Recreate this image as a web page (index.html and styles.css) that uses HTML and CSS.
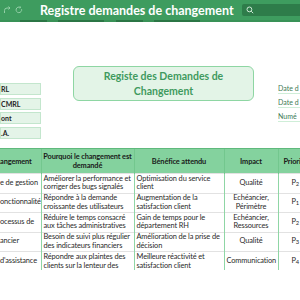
FILE: index.html
```html
<!DOCTYPE html>
<html lang="fr">
<head>
<meta charset="utf-8">
<link rel="stylesheet" href="styles.css">
</head>
<body>
<div class="page">
  <header class="topbar">
    <div class="qa">
      <svg class="qa-icon" width="8" height="8" viewBox="0 0 8 8"><path d="M1.5 7V4.5A2.5 2.5 0 0 1 4 2h3M5.5 0.5 7 2 5.5 3.5" fill="none" stroke="#93cfa7" stroke-width="1"/></svg>
      <svg class="qa-icon" width="8" height="8" viewBox="0 0 8 8"><path d="M6.6 3.2A2.8 2.8 0 1 1 5.4 1.5M5.2 0.4 5.6 1.7 4.3 2" fill="none" stroke="#93cfa7" stroke-width="1"/></svg>
    </div>
    <div class="apptitle">Registre demandes de changement</div>
    <div class="search">
      <svg width="8" height="8" viewBox="0 0 8 8"><circle cx="3.4" cy="3.4" r="2.4" fill="none" stroke="#cfe9d7" stroke-width="1"/><path d="M5.2 5.2 7.2 7.2" stroke="#cfe9d7" stroke-width="1"/></svg>
    </div>
  </header>
  <div class="tabs">
    <span class="tab t1"></span><span class="tab t2"></span><span class="tab t3"></span><span class="tab t4"></span>
  </div>
  <section class="head">
    <div class="infos">
      <div class="info">RL</div>
      <div class="info">CMRL</div>
      <div class="info">ont</div>
      <div class="info">.A.</div>
    </div>
    <div class="titlebox">Registe des Demandes de<br>Changement</div>
    <div class="meta">
      <div class="metaline">Date d</div>
      <div class="metaline">Date d</div>
      <div class="metaline">Numé</div>
    </div>
  </section>
  <div class="tablewrap">
    <table class="reg">
      <colgroup>
        <col class="c1"><col class="c2"><col class="c3"><col class="c4"><col class="c5">
      </colgroup>
      <thead>
        <tr>
          <th class="first">angement</th>
          <th>Pourquoi le changement est<br>demandé</th>
          <th>Bénéfice attendu</th>
          <th>Impact</th>
          <th>Priorité</th>
        </tr>
      </thead>
      <tbody>
        <tr>
          <td class="first">e de gestion</td>
          <td>Améliorer la performance et corriger des bugs signalés</td>
          <td>Optimisation du service client</td>
          <td class="ctr">Qualité</td>
          <td class="ctr">P<span class="n">2</span></td>
        </tr>
        <tr>
          <td class="first">onctionnalité</td>
          <td>Répondre à la demande croissante des utilisateurs</td>
          <td>Augmentation de la satisfaction client</td>
          <td class="ctr">Echéancier, Périmètre</td>
          <td class="ctr">P<span class="n">1</span></td>
        </tr>
        <tr>
          <td class="first">ocessus de</td>
          <td>Réduire le temps consacré aux tâches administratives</td>
          <td>Gain de temps pour le département RH</td>
          <td class="ctr">Echéancier, Ressources</td>
          <td class="ctr">P<span class="n">2</span></td>
        </tr>
        <tr>
          <td class="first">ancier</td>
          <td>Besoin de suivi plus régulier des indicateurs financiers</td>
          <td>Amélioration de la prise de décision</td>
          <td class="ctr">Qualité</td>
          <td class="ctr">P<span class="n">3</span></td>
        </tr>
        <tr>
          <td class="first">d'assistance</td>
          <td>Répondre aux plaintes des clients sur la lenteur des</td>
          <td>Meilleure réactivité et satisfaction client</td>
          <td class="ctr">Communication</td>
          <td class="ctr">P<span class="n">4</span></td>
        </tr>
      </tbody>
    </table>
  </div>
</div>
</body>
</html>
```
FILE: styles.css
```css
* { box-sizing: border-box; }
html, body { margin: 0; padding: 0; background: #fff; }
.page { width: 300px; height: 300px; overflow: hidden; font-family: Lato, "Liberation Sans", sans-serif; }

.topbar { height: 20px; background: #3e9c5f; display: flex; align-items: center; }
.qa { display: flex; gap: 4px; padding-left: 3px; width: 40px; }
.qa-icon { display: block; }
.apptitle { color: #fff; font-weight: 700; font-size: 12.5px; white-space: nowrap; width: 202px; }
.search { flex: 1; height: 12px; background: #2e7c4a; border-radius: 2px 0 0 2px; display: flex; align-items: center; padding-left: 4px; }
.search svg { display: block; }

.tabs { height: 2px; background: #399257; display: flex; }
.tab { height: 2px; background: #2b7645; }
.t1 { margin-left: 20px; width: 27px; }
.t2 { margin-left: 11px; width: 46px; }
.t3 { margin-left: 12px; width: 27px; }
.t4 { margin-left: 11px; width: 46px; }

.head { display: flex; align-items: flex-start; height: 126px; }
.infos { width: 41px; margin-top: 61px; display: flex; flex-direction: column; gap: 2.5px; }
.info { height: 12px; background: #e4f4e8; border: 1px solid #c3e6cd; font-size: 7px; font-weight: 700; color: #1e1e1e; line-height: 10px; padding-left: 0; }
.titlebox { margin-top: 44px; margin-left: 32px; width: 181px; height: 35px; border: 1px solid #8ed6a3; border-radius: 6px; background: #e3f4e7; color: #3f9a5e; font-weight: 700; font-size: 10.5px; line-height: 14.5px; text-align: center; padding-top: 2px; }
.meta { margin-left: 24px; margin-top: 62px; flex: 1; display: flex; flex-direction: column; gap: 4px; }
.metaline { font-size: 7px; color: #3d7a55; height: 10px; line-height: 8px; border-bottom: 1px solid #cfeed8; white-space: nowrap; overflow: hidden; }

.tablewrap { width: 300px; height: 122px; overflow: hidden; }
.reg { border-collapse: collapse; table-layout: fixed; width: 312px; font-size: 7.4px; letter-spacing: -0.12px; color: #2a2a2a; }
.c1 { width: 41px; } .c2 { width: 93px; } .c3 { width: 90px; } .c4 { width: 54px; } .c5 { width: 34px; }
.reg th { background: #84d29e; font-weight: 700; color: #1a1a1a; height: 25px; line-height: 9px; text-align: center; border-top: 1px solid #5fb97c; border-left: 1px solid #73c78e; padding: 0 1px; }
.reg td { height: 19.5px; line-height: 8.7px; padding: 0.5px 2px; border-top: 1px solid #e2e2e2; border-left: 1px solid #8fd6a5; vertical-align: middle; text-align: left; }
.reg th.first, .reg td.first { border-left: none; padding-left: 0; text-align: left; white-space: nowrap; overflow: hidden; }
.reg td.ctr { text-align: center; }
.n { font-size: 5.8px; position: relative; top: 1px; }
```
